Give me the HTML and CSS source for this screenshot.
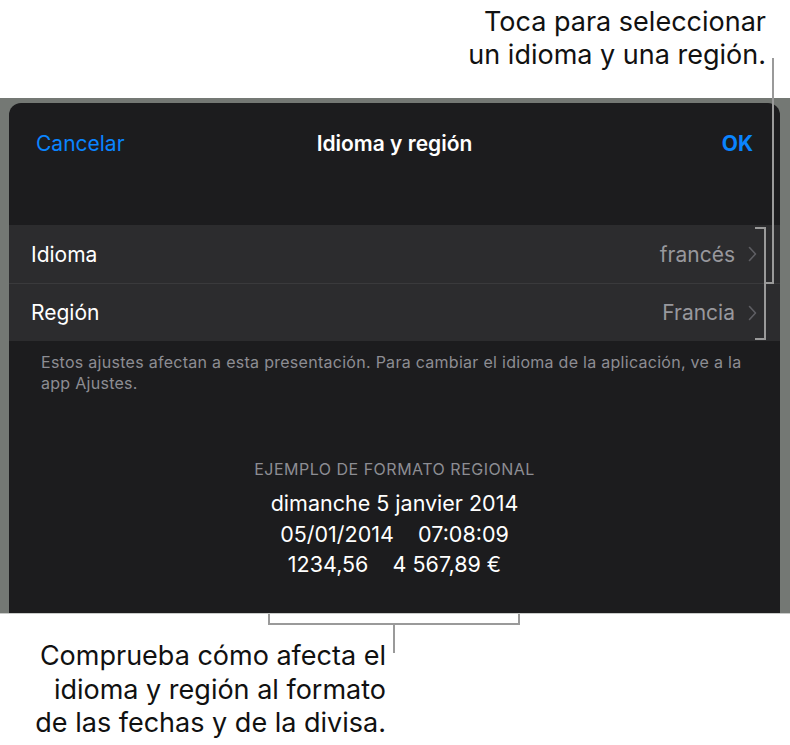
FILE: index.html
```html
<!DOCTYPE html>
<html lang="es">
<head>
<meta charset="utf-8">
<title>Idioma y región</title>
<link rel="stylesheet" href="styles.css">
</head>
<body>
<div class="page">
  <div class="callout-top">
    <p>Toca para seleccionar<br>un idioma y una región.</p>
  </div>

  <div class="frame">
    <div class="sheet">
      <div class="nav">
        <span class="nav-btn">Cancelar</span>
        <span class="nav-title">Idioma y región</span>
        <span class="nav-btn nav-ok">OK</span>
      </div>

      <div class="group">
        <div class="row">
          <span class="row-label">Idioma</span>
          <span class="row-value">francés</span>
          <svg class="chev" width="9" height="16" viewBox="0 0 9 16"><path d="M1.5 1.5 L7.5 8 L1.5 14.5" fill="none" stroke="currentColor" stroke-width="1.6" stroke-linecap="round" stroke-linejoin="round"/></svg>
        </div>
        <div class="row">
          <span class="row-label">Región</span>
          <span class="row-value">Francia</span>
          <svg class="chev" width="9" height="16" viewBox="0 0 9 16"><path d="M1.5 1.5 L7.5 8 L1.5 14.5" fill="none" stroke="currentColor" stroke-width="1.6" stroke-linecap="round" stroke-linejoin="round"/></svg>
        </div>
      </div>

      <p class="footnote">Estos ajustes afectan a esta presentación. Para cambiar el idioma de la aplicación, ve a la app Ajustes.</p>

      <div class="example">
        <div class="example-label">EJEMPLO DE FORMATO REGIONAL</div>
        <div class="example-line">dimanche 5 janvier 2014</div>
        <div class="example-line">05/01/2014&nbsp;&nbsp;&nbsp; 07:08:09</div>
        <div class="example-line">1234,56&nbsp;&nbsp;&nbsp; 4 567,89 €</div>
      </div>
    </div>
  </div>

  <div class="callout-bottom">
    <p>Comprueba cómo afecta el<br>idioma y región al formato<br>de las fechas y de la divisa.</p>
  </div>

  <!-- leader lines (overlay annotations) -->
  <div class="ln ln-top-v"></div>
  <div class="ln ln-top-h"></div>
  <div class="ln ln-br-v"></div>
  <div class="ln ln-br-t1"></div>
  <div class="ln ln-br-t2"></div>

  <div class="ln ln-b-h"></div>
  <div class="ln ln-b-l"></div>
  <div class="ln ln-b-r"></div>
  <div class="ln ln-b-c"></div>
</div>
</body>
</html>
```

FILE: styles.css
```css
* { box-sizing: border-box; }
html, body { margin: 0; padding: 0; background: #ffffff; }
body {
  font-family: Inter, Roboto, "Liberation Sans", sans-serif;
  color: #000;
}
p { margin: 0; }

.page {
  position: relative;
  width: 790px;
  height: 745px;
  overflow: hidden;
}

/* top callout */
.callout-top {
  height: 98px;
  padding: 5px 24px 0 0;
  text-align: right;
  font-size: 27px;
  line-height: 33px;
  color: #111;
}

/* device frame */
.frame {
  height: 516px;
  background: #747874;
  padding: 5px 10px 0 9px;
  border-bottom: 1px solid #c9cbc9;
  display: flex;
}
.sheet {
  flex: 1;
  background: #1c1c1e;
  border-radius: 12px 12px 0 0;
  display: flex;
  flex-direction: column;
}

.nav {
  height: 80px;
  padding: 0 27px 0 27px;
  display: grid;
  grid-template-columns: 1fr auto 1fr;
  align-items: center;
  font-size: 21px;
}
.nav-btn { color: #0a84ff; }
.nav-ok { font-weight: 700; justify-self: end; }
.nav-title {
  color: #fff;
  font-weight: 600;
}

.group {
  margin-top: 42px;
  background: #2c2c2e;
}
.row {
  height: 58px;
  display: flex;
  align-items: center;
  padding: 0 23px 0 22px;
  font-size: 21px;
}
.row + .row { border-top: 1px solid #3a3a3c; }
.row-label { color: #fff; flex: 1; }
.row-value { color: #98989d; margin-right: 13px; }
.chev { color: #5e5e63; }

.footnote {
  margin: 11px 30px 0 32px;
  font-size: 16px;
  letter-spacing: 0.28px;
  line-height: 21px;
  color: #8d8d93;
}

.example {
  margin-top: 65px;
  text-align: center;
  color: #fff;
}
.example-label {
  font-size: 16px;
  letter-spacing: 0.5px;
  line-height: 20px;
  color: #8d8d93;
  margin-bottom: 9px;
}
.example-line {
  font-size: 21.5px;
  line-height: 30.5px;
}

/* bottom callout */
.callout-bottom {
  width: 386px;
  margin-top: 25px;
  text-align: right;
  font-size: 27px;
  line-height: 33.5px;
  color: #111;
}

/* leader lines */
.ln { position: absolute; background: #9a9a9a; }
.ln-top-v { left: 772px; top: 58px; width: 2px; height: 226px; }
.ln-top-h { left: 765px; top: 282px; width: 9px; height: 2px; }
.ln-br-v { left: 764px; top: 227px; width: 2px; height: 113px; }
.ln-br-t1 { left: 755px; top: 227px; width: 11px; height: 2px; }
.ln-br-t2 { left: 755px; top: 338px; width: 11px; height: 2px; }

.ln-b-h { left: 268px; top: 623px; width: 252px; height: 2px; }
.ln-b-l { left: 268px; top: 614px; width: 2px; height: 10px; }
.ln-b-r { left: 518px; top: 614px; width: 2px; height: 10px; }
.ln-b-c { left: 393px; top: 624px; width: 2px; height: 29px; }
```
